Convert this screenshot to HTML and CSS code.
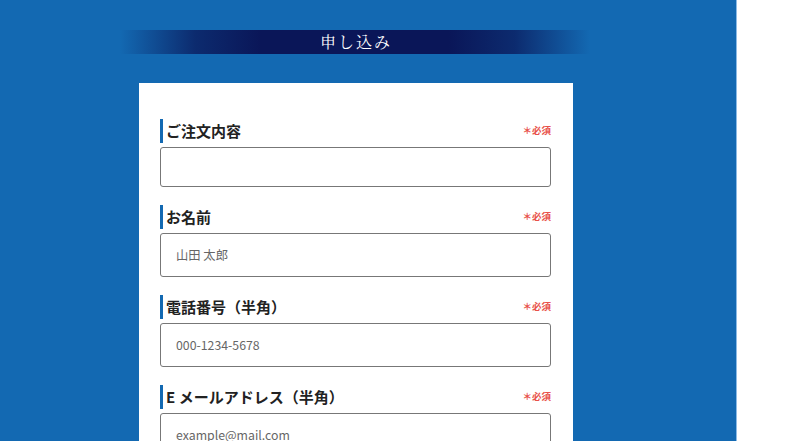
FILE: index.html
```html
<!DOCTYPE html>
<html lang="ja">
<head>
<meta charset="utf-8">
<link rel="stylesheet" href="styles.css">
</head>
<body>
<div class="page">
  <main class="main">
    <div class="banner"><h1 class="banner-title">申し込み</h1></div>
    <form class="card">
      <div class="field">
        <div class="label-row"><span class="label">ご注文内容</span><span class="req">＊必須</span></div>
        <div class="input input-short"></div>
      </div>
      <div class="field">
        <div class="label-row"><span class="label">お名前</span><span class="req">＊必須</span></div>
        <div class="input"><span class="ph">山田 太郎</span></div>
      </div>
      <div class="field">
        <div class="label-row"><span class="label">電話番号（半角）</span><span class="req">＊必須</span></div>
        <div class="input"><span class="ph">000-1234-5678</span></div>
      </div>
      <div class="field">
        <div class="label-row"><span class="label">E メールアドレス（半角）</span><span class="req">＊必須</span></div>
        <div class="input"><span class="ph">example@mail.com</span></div>
      </div>
    </form>
  </main>
  <aside class="side"></aside>
</div>
</body>
</html>
```
FILE: styles.css
```css
html, body {
  margin: 0;
  padding: 0;
  height: 100%;
  overflow: hidden;
  background: #ffffff;
  font-family: "Noto Sans CJK JP", "Noto Sans", sans-serif;
}
.page {
  display: flex;
  height: 441px;
}
.main {
  width: 737px;
  flex: none;
  background: #1369b2;
  border-right: 1px solid #8dbbe6;
  padding-top: 30px;
  box-sizing: border-box;
  overflow: hidden;
}
.side {
  flex: 1;
  background: #ffffff;
}
.banner {
  margin-left: 120px;
  width: 470px;
  height: 24px;
  display: flex;
  align-items: center;
  justify-content: center;
  background: linear-gradient(to right,
    rgba(10, 22, 88, 0) 0%,
    rgba(10, 22, 88, 0.75) 16%,
    #0a1658 30%,
    #0a1658 70%,
    rgba(10, 22, 88, 0.75) 84%,
    rgba(10, 22, 88, 0) 100%);
}
.banner-title {
  margin: 0;
  color: #ffffff;
  font-size: 16px;
  font-weight: 400;
  letter-spacing: 2px;
  line-height: 24px;
  font-family: "Noto Serif CJK JP", "Noto Sans CJK JP", serif;
  padding-left: 2px;
}
.card {
  margin: 29px 0 0 139px;
  width: 434px;
  background: #ffffff;
  padding: 36px 22px 0 21px;
  box-sizing: border-box;
  height: 400px;
  display: flex;
  flex-direction: column;
  gap: 18px;
}
.field {
  display: flex;
  flex-direction: column;
  gap: 4px;
}
.label-row {
  display: flex;
  align-items: center;
  justify-content: space-between;
  height: 24px;
  border-left: 3px solid #1369b2;
  padding-left: 3px;
}
.label {
  font-size: 15px;
  font-weight: 700;
  color: #222222;
  line-height: 24px;
}
.req {
  font-size: 9.5px;
  font-weight: 700;
  color: #e8514a;
  margin-top: -2px;
}
.input {
  height: 44px;
  box-sizing: border-box;
  border: 1px solid #777777;
  border-radius: 3px;
  display: flex;
  align-items: center;
  padding-left: 15px;
}
.input-short {
  height: 40px;
}
.ph {
  font-size: 12.3px;
  color: #666666;
}
```
